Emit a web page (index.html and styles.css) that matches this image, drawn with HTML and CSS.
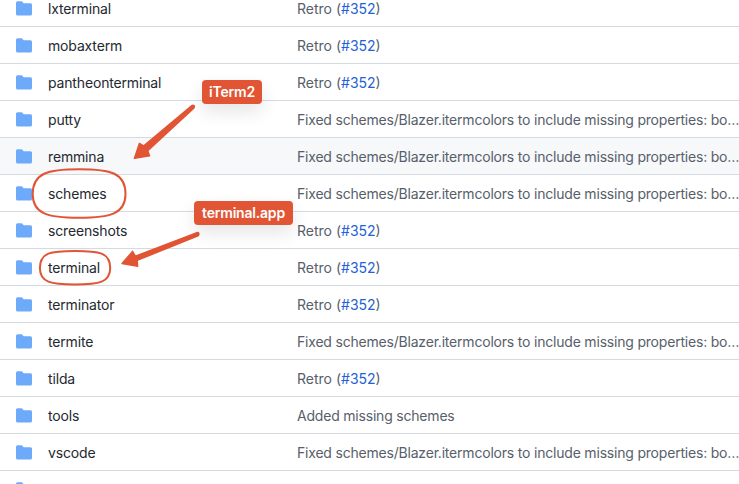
FILE: index.html
```
<!DOCTYPE html>
<html lang="en">
<head>
<meta charset="utf-8">
<title>Files</title>
<link rel="stylesheet" href="styles.css">
</head>
<body>
<svg class="defs" aria-hidden="true"><symbol id="folder" viewBox="0 0 16 16"><path d="M1.5 1.300A1.500 1.500 0 0 0 0 2.800v11.200A1.500 1.500 0 0 0 1.500 15.500h13A1.500 1.500 0 0 0 16 14v-9.300A1.500 1.500 0 0 0 14.500 3.200H7.800a.5.5 0 0 1-.4-.2l-.8-1.100C6.300 1.500 5.900 1.300 5.400 1.300Z"/></symbol></svg>
<main class="files">
<div class="row"><svg class="icon"><use href="#folder"/></svg><span class="name">lxterminal</span><span class="message">Retro (<a>#352</a>)</span></div>
<div class="row"><svg class="icon"><use href="#folder"/></svg><span class="name">mobaxterm</span><span class="message">Retro (<a>#352</a>)</span></div>
<div class="row"><svg class="icon"><use href="#folder"/></svg><span class="name">pantheonterminal</span><span class="message">Retro (<a>#352</a>)</span></div>
<div class="row"><svg class="icon"><use href="#folder"/></svg><span class="name">putty</span><span class="message long">Fixed schemes/Blazer.itermcolors to include missing properties: bo…</span></div>
<div class="row active"><svg class="icon"><use href="#folder"/></svg><span class="name">remmina</span><span class="message long">Fixed schemes/Blazer.itermcolors to include missing properties: bo…</span></div>
<div class="row"><svg class="icon"><use href="#folder"/></svg><span class="name">schemes</span><span class="message long">Fixed schemes/Blazer.itermcolors to include missing properties: bo…</span></div>
<div class="row"><svg class="icon"><use href="#folder"/></svg><span class="name">screenshots</span><span class="message">Retro (<a>#352</a>)</span></div>
<div class="row"><svg class="icon"><use href="#folder"/></svg><span class="name">terminal</span><span class="message">Retro (<a>#352</a>)</span></div>
<div class="row"><svg class="icon"><use href="#folder"/></svg><span class="name">terminator</span><span class="message">Retro (<a>#352</a>)</span></div>
<div class="row"><svg class="icon"><use href="#folder"/></svg><span class="name">termite</span><span class="message long">Fixed schemes/Blazer.itermcolors to include missing properties: bo…</span></div>
<div class="row"><svg class="icon"><use href="#folder"/></svg><span class="name">tilda</span><span class="message">Retro (<a>#352</a>)</span></div>
<div class="row"><svg class="icon"><use href="#folder"/></svg><span class="name">tools</span><span class="message long">Added missing schemes</span></div>
<div class="row"><svg class="icon"><use href="#folder"/></svg><span class="name">vscode</span><span class="message long">Fixed schemes/Blazer.itermcolors to include missing properties: bo…</span></div>
<div class="row"><svg class="icon"><use href="#folder"/></svg></div>
</main>
<svg class="marks" viewBox="0 0 739 484" aria-hidden="true">
<path class="ring" d="M79 169.200C111 169.200 125.500 173 125.500 194C125.500 214 110 217.800 79 217.800C48 217.800 32.700 214 32.700 194C32.700 173 48 169.200 79 169.200Z"/>
<path class="ring" d="M75 251C99 251 110.200 252.500 110.200 268C110.200 282.500 99 284.500 75 284.500C51 284.500 39.900 282.500 39.900 268C39.900 252.500 51 251 75 251Z"/>
<path class="arrow" d="M191.800 105.500Q193.200 104.600 194.200 105.700Q195 107 193.800 108.200L147.800 150.700L149.600 155.800L134.300 158.400L139.400 143.300L143.500 145.900Z"/>
<path class="arrow" d="M197 232.600Q198.300 232.200 198.900 233.600Q199.200 235.300 198 235.900L137.200 260.400L137.700 266.300L122 263.500L132.600 251.300L135.400 256Z"/>
</svg>
<div class="tag tag-iterm">iTerm2</div>
<div class="tag tag-terminal">terminal.app</div>
</body>
</html>
```
FILE: styles.css
```
body {
  margin: 0;
  height: 484px;
  position: relative;
  overflow: hidden;
  background: #fff;
  font: 14px/20px Inter, "Liberation Sans", sans-serif;
  color: #24292f;
}
.defs { position: absolute; width: 0; height: 0; }
.files { margin-top: -10px; }
.row {
  box-sizing: border-box;
  height: 37px;
  display: grid;
  grid-template-columns: 16px 233px 1fr;
  column-gap: 16px;
  align-items: center;
  padding-left: 16px;
  border-bottom: 1px solid #d5dae0;
}
.active { background: #f6f8fa; }
.icon { width: 16px; height: 16px; fill: #6eaafa; }
.name, .message { white-space: nowrap; padding-top: 1px; }
.name { letter-spacing: -.16px; }
.message { color: #57606a; }
.message a { color: #2461d8; }
.long { letter-spacing: -.2px; }
.marks { position: absolute; inset: 0; width: 739px; height: 484px; }
.ring { fill: none; stroke: #e15434; stroke-width: 2; }
.arrow { fill: #e15434; stroke: #e15434; stroke-width: 1.3; stroke-linejoin: round; }
.tag {
  position: absolute;
  height: 24px;
  line-height: 24px;
  border-radius: 4px;
  background: #e15434;
  color: #fff;
  font-weight: 600;
  letter-spacing: -.2px;
  text-align: center;
  box-shadow: 0 8px 18px rgba(0, 0, 0, .1);
}
.tag-iterm { left: 202px; top: 80px; width: 60px; }
.tag-terminal { left: 194px; top: 201.400px; width: 99px; }
```
